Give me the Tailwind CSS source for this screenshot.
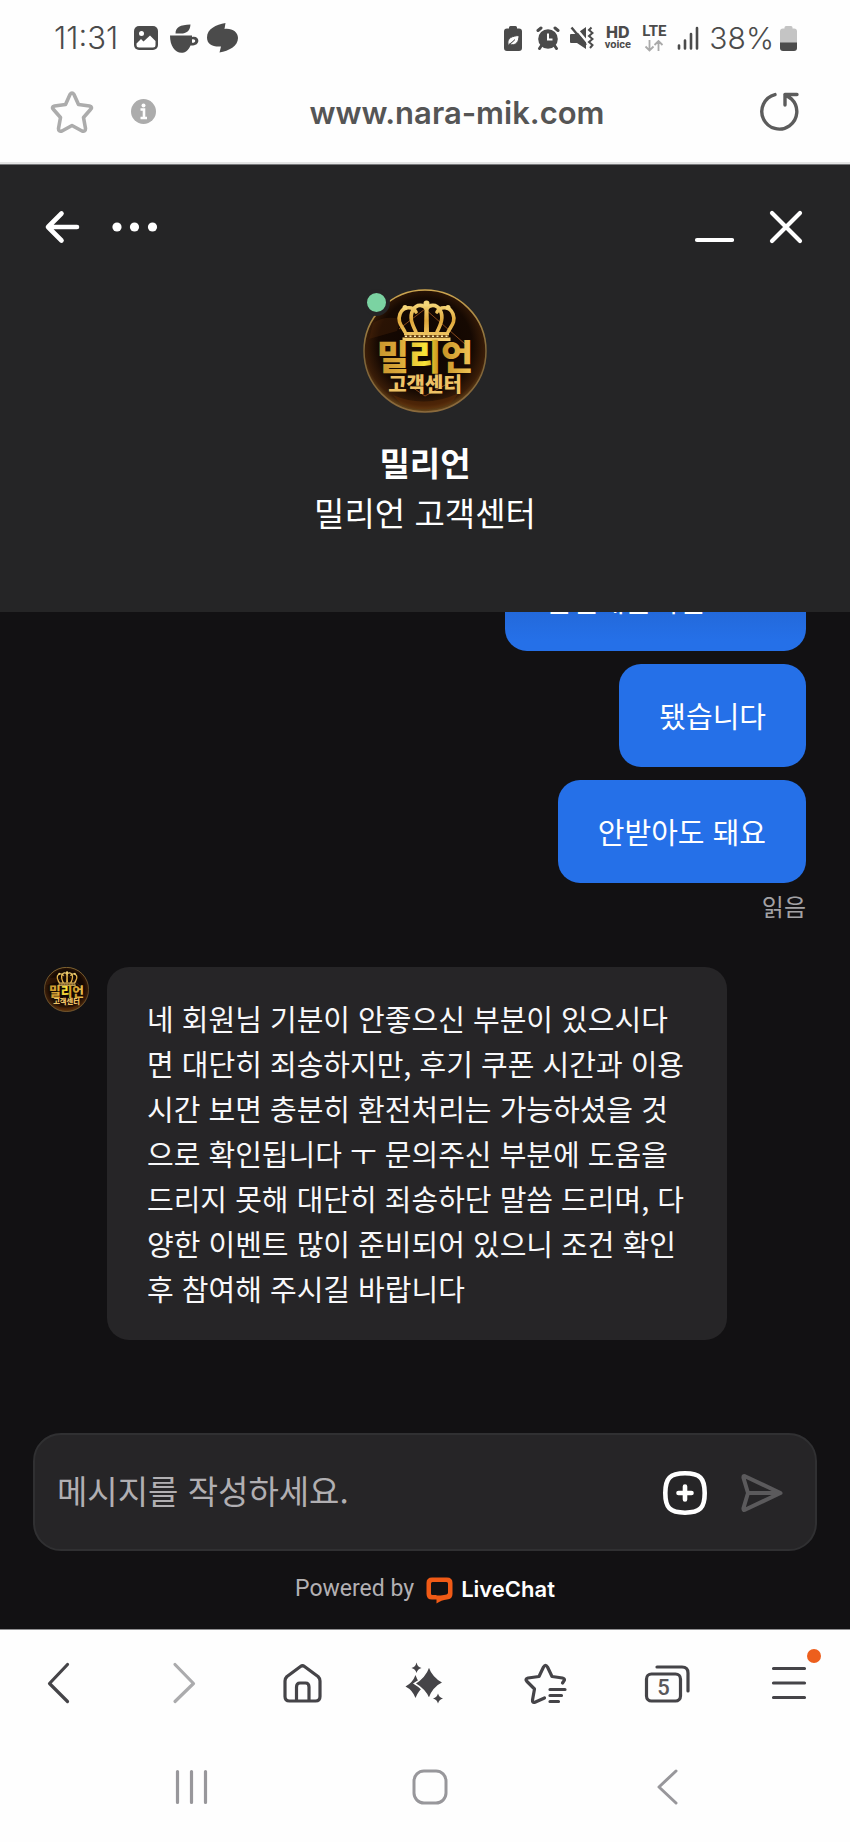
<!DOCTYPE html>
<html lang="ko">
<head>
<meta charset="utf-8">
<meta name="viewport" content="width=device-width, initial-scale=1">
<title>밀리언 고객센터</title>
<script src="https://cdn.jsdelivr.net/npm/@tailwindcss/browser@4"></script>
</head>
<body class="flex h-dvh flex-col overflow-hidden bg-[#121113] font-['Noto_Sans_CJK_KR',sans-serif]">

<svg class="absolute size-0" aria-hidden="true">
  <defs>
    <linearGradient id="gold" x1="0" y1="0" x2="1" y2="0">
      <stop offset="0" stop-color="#c8952c"/><stop offset=".25" stop-color="#dca93a"/><stop offset=".5" stop-color="#f8e437"/><stop offset=".65" stop-color="#c6901f"/><stop offset="1" stop-color="#f0c65a"/>
    </linearGradient>
    <linearGradient id="goldV" gradientUnits="userSpaceOnUse" x1="0" y1="12" x2="0" y2="52">
      <stop offset="0" stop-color="#f7dc83"/><stop offset=".5" stop-color="#e0a83a"/><stop offset="1" stop-color="#f3cf72"/>
    </linearGradient>
    <radialGradient id="disc" cx=".5" cy=".45" r=".55">
      <stop offset="0" stop-color="#0e0502"/><stop offset=".7" stop-color="#160902"/><stop offset=".9" stop-color="#3a1d08"/><stop offset="1" stop-color="#6b4a1c"/>
    </radialGradient>
    <linearGradient id="rim" x1="0" y1="0" x2="0" y2="1">
      <stop offset="0" stop-color="#cfa750"/><stop offset=".5" stop-color="#7d6438"/><stop offset="1" stop-color="#8b6a3c"/>
    </linearGradient>
  </defs>
  <symbol id="avatar" viewBox="0 0 124 124">
    <circle cx="62" cy="62" r="61" fill="url(#disc)" stroke="url(#rim)" stroke-width="1.5"/>
    <path d="M10 34 Q22 26 38 30 L34 42 L6 50Z" fill="#5b2b0a" opacity=".3"/>
    <path d="M30 106 Q62 120 96 104 L88 114 Q62 126 38 115Z" fill="#6b3208" opacity=".4"/>
    <path d="M36 40 62 20 102 55M84 95 62 107 46 96" fill="none" stroke="#8a4a1c" stroke-width="1"/>
    <g fill="none" stroke="url(#goldV)" stroke-width="3.600" stroke-linecap="round">
      <path d="M42 43C39 37 34 33 37 25C40 17 50 17 53 23"/>
      <path d="M85 43C88 37 93 33 90 25C87 17 77 17 74 23"/>
      <path d="M53 43C49 35 46 28 50 21C54 14 61 16 63.500 20C66 16 73 14 77 21C81 28 78 35 74 43"/>
    </g>
    <path d="M61.500 18H65.500L66 43H61Z" fill="url(#goldV)"/>
    <g fill="#f5d67a"><circle cx="63.500" cy="14.500" r="3"/><circle cx="42" cy="18.500" r="2.500"/><circle cx="85" cy="18.500" r="2.500"/></g>
    <path d="M41 43H86V46H41ZM39.500 48.500H87.500V52H39.500Z" fill="url(#goldV)"/>
    <path d="M41 46H86V48.500H41Z" fill="#6d4310"/>
    <path d="M42 47.200H86" stroke="#fff0b0" stroke-width="1.600" stroke-dasharray="2 2.500"/>
    <text x="62" y="81" text-anchor="middle" font-family="Noto Sans CJK KR, sans-serif" font-weight="900" font-size="35" fill="url(#gold)">밀리언</text>
    <text x="62" y="103" text-anchor="middle" font-family="Noto Sans CJK KR, sans-serif" font-weight="900" font-size="20" fill="#eec266">고객센터</text>
  </symbol>
</svg>

<!-- Device status and address bar -->
<header class="shrink-0 border-b border-[#77787a] bg-[#fefefe] text-[#4b4b4b]">
  <div class="flex h-[76px] items-center justify-between pr-[53px] pl-[54px] font-[Inter,sans-serif]">
    <div class="flex items-center gap-2">
      <span class="w-[72px] text-[31px] font-light">11:31</span>
      <svg class="w-6" viewBox="0 0 24 24" aria-hidden="true"><rect width="24" height="24" rx="5" fill="#4b4b4b"/><circle cx="7.500" cy="7.500" r="2.500" fill="#fff"/><path d="M2.500 17.500 7 13 9.500 15.500 16 9.500 21.500 15V19Q21.500 21.500 19 21.500H5Q2.500 21.500 2.500 19Z" fill="#fff"/></svg>
      <svg class="ml-1 w-[29px]" viewBox="0 0 29 29" aria-hidden="true"><path d="M5.500 9.500C5.500 3 10 1 20.500 0.500C20 7 16.500 9.500 11 9.500Z" fill="#4b4b4b"/><path d="M0 11.500H22V13C29.500 11 31 21 23 21.500H20.500C18 27 15 28.800 11.500 28.800C5 28.800 0 22 0 11.500ZM22 15.500V18.800C26.500 19 26 14.500 22 15.500Z" fill="#4b4b4b" fill-rule="evenodd"/></svg>
      <svg class="w-[31px]" viewBox="0 0 31 30" aria-hidden="true"><path d="M18.500 0L17.500 6C25 5 31 9 31 15C31 23 22 28 12.500 29.500L14 23.500C5 24 0 21 0 14.500C0 6 9 1.500 18.500 0Z" fill="#4b4b4b"/></svg>
    </div>
    <div class="flex items-center gap-2.5">
      <svg class="w-[22px]" viewBox="0 0 22 25" aria-hidden="true"><path d="M5 2.500V1.500Q5 0 6.500 0H11.500Q13 0 13 1.500V2.500H15Q18 2.500 18 5.500V22Q18 25 15 25H3Q0 25 0 22V5.500Q0 2.500 3 2.500Z" fill="#4b4b4b"/><path d="M4 18C3 12 8 10 15 9.500C15 16 12 20 5.500 18.500M2.500 20C6 18.500 8 16.500 11 13.500" fill="#fff" stroke="#4b4b4b" stroke-width="1"/></svg>
      <svg class="w-6" viewBox="0 0 24 24" aria-hidden="true"><circle cx="12" cy="13" r="9.800" fill="#4b4b4b"/><path d="M2 4.500 5 2M22 4.500 19 2M5.500 19.500 3.500 22.500M18.500 19.500 20.500 22.500" stroke="#4b4b4b" stroke-width="3" stroke-linecap="round"/><path d="M12 7.500V13.500H16.500" fill="none" stroke="#fff" stroke-width="2"/></svg>
      <svg class="w-6" viewBox="0 0 24 24" aria-hidden="true"><path d="M1 8H6L16 1V23L7 17H1Q0 17 0 16V9Q0 8 1 8Z" fill="#4b4b4b"/><path d="M3 -1 19 18" stroke="#fefefe" stroke-width="2.500"/><path d="M1.500 1.500 16 19" stroke="#4b4b4b" stroke-width="2.400"/><path d="M21.500 1.500 19 4 22.500 7 19 10 22.500 13 19 16 22.500 19 20 22" fill="none" stroke="#4b4b4b" stroke-width="2"/></svg>
      <div class="flex w-[27px] flex-col items-center text-center"><span class="text-[16px] leading-[14px] font-extrabold">HD</span><span class="font-[Roboto,sans-serif] text-[11px] leading-[12px] font-bold">voice</span></div>
      <div class="flex w-[26px] flex-col items-center gap-0.5"><span class="font-[Roboto,sans-serif] text-[15px] leading-[14px] font-bold">LTE</span>
        <svg class="w-5" viewBox="0 0 20 12" aria-hidden="true"><path d="M5.500 0V10M1.500 6.500 5.500 10.500 9.500 6.500M14.500 11V1.500M10.500 5 14.500 1 18.500 5" fill="none" stroke="#aaa" stroke-width="1.800"/></svg></div>
      <svg class="w-[22px]" viewBox="0 0 22 24" aria-hidden="true"><path d="M2 19.500V22.500M8 14.500V22.500M14 8V22.500M20 2V22.500" stroke="#4b4b4b" stroke-width="2.600" stroke-linecap="round"/></svg>
      <span class="-mr-1 text-[30px] font-light">38%</span>
      <svg class="w-[17px]" viewBox="0 0 17 25" aria-hidden="true"><path d="M4.500 2.500V1.500Q4.500 0 6 0H11Q12.500 0 12.500 1.500V2.500H14Q17 2.500 17 5.500V17H0V5.500Q0 2.500 3 2.500Z" fill="#c4c4c4"/><path d="M0 16.500H17V22Q17 25 14 25H3Q0 25 0 22Z" fill="#4b4b4b"/></svg>
    </div>
  </div>
  <div class="flex h-[88px] items-start border-b-2 border-[#e4e4e4] pr-[50px] pl-[50px]">
    <button class="mt-[14px]" aria-label="즐겨찾기"><svg class="size-11" viewBox="0 0 44 44" fill="none" stroke="#acacac" stroke-width="3.600" stroke-linejoin="round"><path d="M20 4.500Q22 1.500 24 4.500L28.500 14.500 39.500 16Q43 17 40.500 19.500L33.500 27.500 35.500 38.500Q35.500 42 32 41L22 35.500 12 41Q8.500 42 8.500 38.500L10.500 27.500 3.500 19.500Q1 17 4.500 16L15.500 14.500Z"/></svg></button>
    <button class="mt-[23px] ml-[37px]" aria-label="사이트 정보"><svg class="size-[25px]" viewBox="0 0 25 25"><circle cx="12.500" cy="12.500" r="12.500" fill="#acacac"/><circle cx="12.500" cy="6.500" r="2" fill="#fff"/><path d="M9.500 10.500H13V19M9.500 19H16" fill="none" stroke="#fff" stroke-width="2.600"/></svg></button>
    <span class="mt-2.5 flex-1 text-center font-[Inter,sans-serif] text-[31px] leading-[54px] font-semibold text-[#555]">www.nara-mik.com</span>
    <button class="mt-[14px]" aria-label="새로고침"><svg class="h-11 w-[42px]" viewBox="0 0 42 44" fill="none" stroke="#5c5c5c" stroke-width="3.400" stroke-linecap="round" stroke-linejoin="round"><path d="M17 4.600A17.500 17.500 0 1 0 33.500 9L27 4.500H39M27 4.500V15"/></svg></button>
  </div>
</header>

<!-- Chat header -->
<section class="relative z-10 shrink-0 bg-[#252526] px-[38px] pt-[38px] pb-[75px] text-white">
  <div class="flex h-12 items-center justify-between">
    <div class="flex gap-6">
      <button aria-label="뒤로"><svg class="size-12" viewBox="0 0 48 48" fill="none" stroke="currentColor" stroke-width="4.600" stroke-linecap="round" stroke-linejoin="round"><path d="M23.500 10.500 10 24 23.500 37.500M11 24H39"/></svg></button>
      <button aria-label="더 보기"><svg class="size-12" viewBox="0 0 48 48" fill="currentColor"><circle cx="7" cy="24" r="4.600"/><circle cx="24.500" cy="24" r="4.600"/><circle cx="42.500" cy="24" r="4.600"/></svg></button>
    </div>
    <div class="flex gap-[30px]">
      <button aria-label="최소화"><svg class="size-12" viewBox="0 0 48 48" fill="none" stroke="currentColor" stroke-width="4.200" stroke-linecap="round"><path d="M11 37H46"/></svg></button>
      <button aria-label="닫기"><svg class="size-12" viewBox="0 0 48 48" fill="none" stroke="currentColor" stroke-width="4.200" stroke-linecap="round"><path d="M8 10 36 38M36 10 8 38"/></svg></button>
    </div>
  </div>
  <div class="mt-[38px] flex flex-col items-center text-[33px] leading-[50px]">
    <div class="relative">
      <svg class="size-[124px]" role="img" aria-label="밀리언 고객센터"><use href="#avatar"/></svg>
      <span class="absolute top-0 left-0 size-[27px] rounded-full border-4 border-[#252526] bg-[#7bd3a2]"></span>
    </div>
    <h1 class="mt-6 font-bold">밀리언</h1>
    <p>밀리언 고객센터</p>
  </div>
</section>

<!-- Conversation -->
<main class="flex min-h-0 flex-1 flex-col justify-end overflow-hidden px-11 pb-[93px] text-[29px] leading-[45px] text-[#f8f8fa]">
  <div class="flex shrink-0 flex-col items-end gap-[13px] text-white">
    <p class="w-[301px] rounded-[22px] bg-linear-to-b from-[#1e5abf] to-[#2570e8] to-90% px-10 py-[29px]">한번해준거면</p>
    <p class="rounded-[22px] bg-[#2570e8] px-10 py-[29px]">됐습니다</p>
    <p class="rounded-[22px] bg-[#2570e8] px-10 py-[29px]">안받아도 돼요</p>
  </div>
  <p class="mt-[5px] shrink-0 text-right text-[24px] leading-9 text-[#a3a2a5]">읽음</p>
  <div class="mt-[43px] flex shrink-0 items-start gap-[18px]">
    <svg class="size-[45px] shrink-0" role="img" aria-label="밀리언 고객센터"><use href="#avatar"/></svg>
    <p class="max-w-[620px] rounded-[22px] bg-[#262527] px-10 py-[29px]">네 회원님 기분이 안좋으신 부분이 있으시다<wbr>면 대단히 죄송하지만, 후기 쿠폰 시간과 이용 시간 보면 충분히 환전처리는 가능하셨을 것으로 확인됩니다 ㅜ 문의주신 부분에 도움을 드리지 못해 대단히 죄송하단 말씀 드리며, 다양한 이벤트 많이 준비되어 있으니 조건 확인 후 참여해 주시길 바랍니다</p>
  </div>
</main>

<!-- Composer -->
<form class="mx-[33px] flex h-[118px] shrink-0 items-center rounded-[28px] border-2 border-[#303032] bg-[#262527] pr-[30px] pl-[22px]">
  <input type="text" aria-label="메시지" placeholder="메시지를 작성하세요." class="min-w-0 flex-1 bg-transparent pb-1 text-[33px] leading-[50px] text-white outline-none placeholder:text-[#b1afb2]">
  <button type="button" aria-label="첨부"><svg class="mt-0.5 size-12" viewBox="0 0 48 48" fill="none" stroke="#fff" stroke-width="4.600" stroke-linecap="round"><path d="M24 4.300C39 4.300 43.700 9 43.700 24S39 43.700 24 43.700S4.300 39 4.300 24S9 4.300 24 4.300ZM24 17.500V30.500M17.500 24H30.500"/></svg></button>
  <button type="submit" class="ml-7" aria-label="보내기"><svg class="mt-0.5 size-12" viewBox="0 0 48 48" fill="none" stroke="#5b5a5c" stroke-width="4" stroke-linecap="round" stroke-linejoin="round"><path d="M8.500 7.500Q6 6 6.500 9L11 24 6.500 39Q6 42 8.500 40.500L43.500 24ZM11 24H43"/></svg></button>
</form>
<div class="flex h-[78px] shrink-0 items-center justify-center pb-0.5 font-[Roboto,sans-serif] text-[23px] text-[#b3b0b3]">
  <span>Powered by</span>
  <a href="#" class="ml-3 flex items-center gap-2 font-[Inter,sans-serif] text-[22px] font-semibold text-white">
    <svg class="mt-0.5 size-[27px]" viewBox="0 0 27 27" aria-hidden="true"><path d="M6 0.500H21Q26.500 0.500 26.500 6V17Q26.500 22 21 22.500C17 23 14 24 10.500 26.500V18.500H14.500C17 18 19 18 20.500 17.500Q22 17 22 15.500V6.500Q22 5 20.500 5H6.500Q5 5 5 6.500V16.500Q5 18 6.500 18H10.500V22.500H6Q0.500 22.500 0.500 17V6Q0.500 0.500 6 0.500Z" fill="#f05a16"/></svg>
    <span>LiveChat</span>
  </a>
</div>

<!-- Browser toolbar and system keys -->
<footer class="shrink-0 bg-[#fefefe]">
  <nav class="flex h-[106px] items-center justify-between border-t border-[#8f8f91] pr-[37px] pl-[35px]" aria-label="브라우저 도구">
    <button aria-label="이전"><svg class="size-12" viewBox="0 0 48 48" fill="none" stroke="#454448" stroke-width="3.200" stroke-linecap="round" stroke-linejoin="round"><path d="M32.500 5.500 14.500 24.500 32.500 42.500"/></svg></button>
    <button aria-label="다음"><svg class="size-12" viewBox="0 0 48 48" fill="none" stroke="#ababad" stroke-width="3.200" stroke-linecap="round" stroke-linejoin="round"><path d="M18 5.500 36.500 24.500 18 42.500"/></svg></button>
    <button aria-label="홈"><svg class="size-12" viewBox="0 0 48 48" fill="none" stroke="#454448" stroke-width="3.200" stroke-linejoin="round"><path d="M22.500 7.500Q24.500 6 26.500 7.500L40 17.500Q42 19.500 42 22V37.500Q42 42 37.500 42H11.500Q7 42 7 37.500V22Q7 19.500 9 17.500ZM18.500 42V28Q18.500 24 22 24H27.500Q31 24 31 28V42"/></svg></button>
    <button aria-label="AI 도구"><svg class="size-12" viewBox="0 0 48 48" fill="#454448"><path d="M16.500 3.500Q17.500 8 21.500 9Q17.500 10 16.500 14Q15.500 10 11.500 9Q15.500 8 16.500 3.500Z"/><path d="M15.500 16Q18 24 24.500 27.500Q18.500 31 15.500 39Q12.500 31 5.500 27.500Q12.500 24 15.500 16Z"/><path d="M29 7Q33 18.500 43.500 23.500Q33 28.500 29 40Q25 30.500 14.500 24.500Q25 18.500 29 7Z" stroke="#fefefe" stroke-width="1.500"/><path d="M38 34.500Q39 38.500 43 39.500Q39 40.500 38 44.500Q37 40.500 33 39.500Q37 38.500 38 34.500Z"/></svg></button>
    <button aria-label="북마크 목록"><svg class="size-12" viewBox="0 0 48 48" fill="none" stroke="#454448" stroke-width="3.200" stroke-linecap="round" stroke-linejoin="round"><path d="M22.500 39 13.500 43Q10 44.500 10.500 41L12.500 30 5 22.500Q2.500 20 6 19L17 17.500 21.500 8Q23.500 4.500 25.500 8L30 17.500 40.500 19Q44 20 41.500 22.500L40.500 24M28 30.500H43M28 36.500H39.500M28 42.500H36.500"/></svg></button>
    <button aria-label="탭 5개"><svg class="size-12" viewBox="0 0 48 48" fill="none" stroke="#454448" stroke-width="3.200" stroke-linecap="round"><rect x="3.500" y="15" width="34" height="27" rx="5"/><path d="M14 8H39Q45 8 45 14V32"/><text x="20.500" y="36" text-anchor="middle" font-family="Roboto, sans-serif" font-size="22" font-weight="500" stroke="none" fill="#58575b">5</text></svg></button>
    <button class="relative" aria-label="메뉴"><svg class="size-12" viewBox="0 0 48 48" fill="none" stroke="#454448" stroke-width="3.200" stroke-linecap="round"><path d="M8.500 9.500H39.500M8.500 24H39.500M8.500 38.500H39.500"/></svg><span class="absolute -top-2.5 -right-2 size-3.5 rounded-full bg-[#ed5f1d]"></span></button>
  </nav>
  <nav class="flex h-[107px] items-center justify-between pr-[158px] pb-[3px] pl-[167px]" aria-label="시스템 탐색">
    <button aria-label="최근 앱"><svg class="size-12" viewBox="0 0 48 48" stroke="#98979b" stroke-width="3.200" stroke-linecap="round"><path d="M10.500 8.500V39.500M24.500 8.500V39.500M38.500 8.500V39.500"/></svg></button>
    <button aria-label="홈 화면"><svg class="size-12" viewBox="0 0 48 48" fill="none" stroke="#98979b" stroke-width="3"><rect x="8" y="8" width="32" height="32" rx="10"/></svg></button>
    <button aria-label="뒤로 가기"><svg class="size-12" viewBox="0 0 48 48" fill="none" stroke="#98979b" stroke-width="3" stroke-linecap="round" stroke-linejoin="round"><path d="M32 8 15 24 32 40"/></svg></button>
  </nav>
</footer>
</body>
</html>
